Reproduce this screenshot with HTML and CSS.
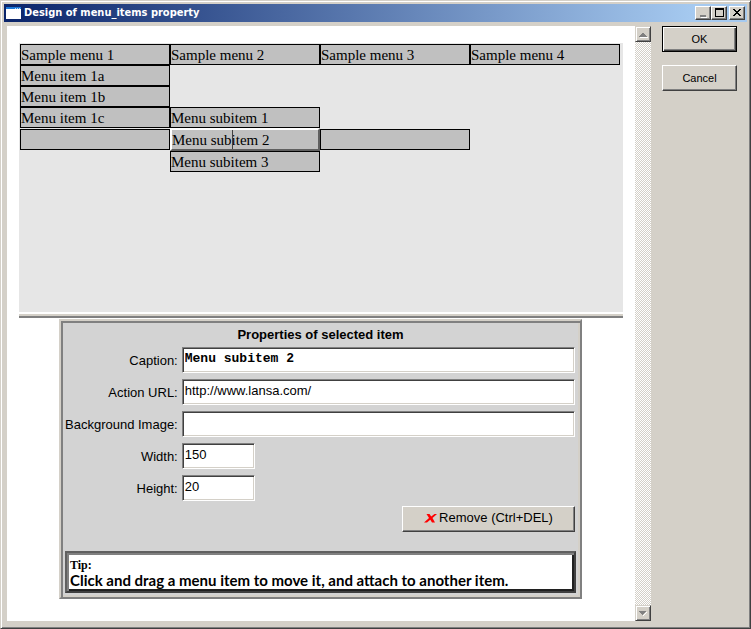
FILE: index.html
```html
<!DOCTYPE html>
<html lang="en">
<head>
  <meta charset="UTF-8">
  <title>Design of menu_items property</title>
  <link rel="stylesheet" href="styles.css">
</head>
<body>

<div class="window">

  <div class="titlebar">
    <svg class="app-icon" width="16" height="14" viewBox="0 0 16 14" shape-rendering="crispEdges">
      <rect x="0" y="1" width="15" height="12" fill="#fff"/>
      <rect x="0" y="1" width="15" height="2" fill="#1c78d8"/>
      <path d="M9 2.500h1M11 2.500h1M13 2.500h1" stroke="#b8d8f8"/>
    </svg>
    <h1 class="title">Design of menu_items property</h1>
    <button class="tool" aria-label="Minimize">
      <svg width="12" height="10" viewBox="0 0 12 10" shape-rendering="crispEdges"><path d="M4 9h6v1H4z" fill="#fff"/><path d="M3 7h6v2H3z" fill="#808080"/></svg>
    </button>
    <button class="tool" aria-label="Maximize">
      <svg width="12" height="10" viewBox="0 0 12 10" shape-rendering="crispEdges"><path d="M2 0h9v9H2zM3 2v6h7V2z" fill="#000" fill-rule="evenodd"/></svg>
    </button>
    <button class="tool close" aria-label="Close">
      <svg width="12" height="10" viewBox="0 0 12 10" shape-rendering="crispEdges"><path d="M2 1h2v1h1v1h2V2h1V1h2v1H9v1H8v1H7v1h1v1h1v1h1v1H8V7H7V6H5v1H4v1H2V7h1V6h1V5h1V4H4V3H3V2H2z" fill="#000"/></svg>
    </button>
  </div>

  <div class="content">

    <div class="document">

      <!-- menu tree, one grid column per level -->
      <div class="designer">
        <div class="item">Sample menu 1</div>
        <div class="item">Sample menu 2</div>
        <div class="item">Sample menu 3</div>
        <div class="item">Sample menu 4</div>
        <div class="item level1">Menu item 1a</div>
        <div class="item level1">Menu item 1b</div>
        <div class="item level1">Menu item 1c</div>
        <div class="item level2">Menu subitem 1</div>
        <div class="item level1"></div>
        <div class="item level2 selected">Menu subitem 2<span class="cursor"></span></div>
        <div class="item level3"></div>
        <div class="item level2">Menu subitem 3</div>
      </div>

      <div class="splitter"></div>

      <form class="properties">
        <h2>Properties of selected item</h2>
        <div class="fields">
          <label for="caption">Caption:</label>
          <input type="text" id="caption" class="mono" value="Menu subitem 2">
          <label for="url">Action URL:</label>
          <input type="text" id="url" value="http://www.lansa.com/">
          <label for="image">Background Image:</label>
          <input type="text" id="image" value="">
          <label for="width">Width:</label>
          <input type="text" id="width" class="short" value="150">
          <label for="height">Height:</label>
          <input type="text" id="height" class="short" value="20">
        </div>
        <button type="button" class="remove">
          <svg width="13" height="11" viewBox="0 0 13 11"><path d="M2.500 2h3l1.700 2.500L10.500 2H13L8.500 6l2.500 4.500H8L6.300 7.800L3 10.500H0L5 6z" fill="#f00"/></svg>
          Remove (Ctrl+DEL)
        </button>
        <div class="tip">
          <p class="tip-head">Tip:</p>
          <p class="tip-text">Click and drag a menu item to move it, and attach to another item.</p>
        </div>
      </form>

    </div>

    <div class="scrollbar">
      <button class="arrow" aria-label="Scroll up">
        <svg width="12" height="12" viewBox="0 0 12 12" shape-rendering="crispEdges"><path d="M3 9h8v1H3z" fill="#fff"/><path d="M6 5h1v1h1v1h1v1h1v1H2V8h1V7h1V6h1V5z" fill="#808080"/></svg>
      </button>
      <button class="arrow" aria-label="Scroll down">
        <svg width="12" height="12" viewBox="0 0 12 12" shape-rendering="crispEdges"><path d="M10 5v1H9v1H8v1H7v1H6V8h1V7h1V6h1V5z" fill="#fff"/><path d="M2 4h7v1H8v1H7v1H6v1H5V7H4V6H3V5H2z" fill="#808080"/></svg>
      </button>
    </div>

    <div class="actions">
      <button class="default">OK</button>
      <button>Cancel</button>
    </div>

  </div>
</div>

</body>
</html>
```
FILE: styles.css
```css
* {
  box-sizing: border-box;
}
body {
  margin: 0;
  font-family: "Liberation Sans", Arial, sans-serif;
  font-size: 13px;
  color: #000;
}
h1, h2, p {
  margin: 0;
}

/* raised grey 3D button */
button {
  padding: 0;
  background: #d4d0c8;
  border: 1px solid;
  border-color: #fff #404040 #404040 #fff;
  border-radius: 0;
  box-shadow: inset -1px -1px #808080;
  font-family: inherit;
  color: #000;
}

.window {
  display: flex;
  flex-direction: column;
  min-height: 100vh;
  padding: 3px;
  background: #d4d0c8;
  border: 1px solid;
  border-color: #d4d0c8 #404040 #404040 #d4d0c8;
  box-shadow: inset 1px 1px #fff, inset -1px -1px #808080;
}

.titlebar {
  display: flex;
  align-items: center;
  height: 18px;
  padding: 0 2px;
  background: linear-gradient(to right, #0a246a, #a6caf0 93%);
}
.title {
  flex: 1;
  margin-left: 2px;
  font-family: "DejaVu Sans Condensed", Tahoma, sans-serif;
  font-size: 11px;
  line-height: 18px;
  color: #fff;
}
.tool {
  display: flex;
  width: 16px;
  height: 14px;
}
.tool svg {
  margin: 1px;
}
.close {
  margin-left: 2px;
}

.content {
  flex: 1;
  display: flex;
  padding: 4px 10px 4px 3px;
}
.document {
  flex: 1;
  padding: 17px 12px 22px;
  background: #fff;
}

.designer {
  display: grid;
  grid-template-columns: repeat(4, 150px);
  align-items: center;
  align-content: start;
  min-height: 269px;
  padding: 1px;
  background: #e6e6e6;
}
.item {
  height: 21px;
  background: #c0c0c0;
  border: 1px solid #000;
  font-family: "Liberation Serif", "Times New Roman", serif;
  font-size: 15px;
  line-height: 20px;
}
.level1 {
  grid-column: 1;
}
.level2 {
  grid-column: 2;
}
.level3 {
  grid-column: 3;
}
.selected {
  position: relative;
  height: 23px;
  border: 2px solid;
  border-color: #fff #606060 #606060 #fff;
}
.cursor {
  position: absolute;
  left: 60px;
  top: 0;
  width: 1px;
  height: 19px;
  background: #404040;
}

.splitter {
  height: 6px;
  border: solid;
  border-width: 2px 0;
  border-color: #fff #808080 #808080;
  background: #d4d0c8;
}

.properties {
  margin: 1px 41px 0 40px;
  padding: 2px 4px 4px;
  background: #d3d3d3;
  border: 2px solid;
  border-color: #d4d0c8 #808080 #808080 #d4d0c8;
  box-shadow: inset 2px 2px #808080, inset -2px -2px #d4d0c8;
}
.properties h2 {
  font-size: 13px;
  line-height: 24px;
  text-align: center;
}
.fields {
  display: grid;
  grid-template-columns: auto 1fr;
  gap: 6px 4px;
  align-items: center;
  margin-right: 1px;
}
.fields label {
  text-align: right;
  white-space: nowrap;
}
.fields input {
  width: 100%;
  height: 26px;
  padding: 0 2px 4px;
  background: #fff;
  border: 1px solid;
  border-color: #808080 #fff #fff #808080;
  border-radius: 0;
  box-shadow: inset 1px 1px #404040, inset -1px -1px #d4d0c8;
  font-family: inherit;
  font-size: 13px;
}
.fields .mono {
  font-family: "Liberation Mono", "Courier New", monospace;
  font-weight: bold;
}
.fields .short {
  width: 73px;
}
.remove {
  display: flex;
  align-items: center;
  justify-content: center;
  gap: 2px;
  width: 173px;
  height: 26px;
  margin: 5px 1px 19px auto;
  padding-bottom: 3px;
  font-size: 13px;
}

.tip {
  min-height: 42px;
  padding: 5px 3px 2px;
  background: #fff;
  border: 2px solid;
  border-color: #606060 #404040 #404040 #606060;
  box-shadow: inset 2px 2px #808080, inset -2px -2px #202020;
}
.tip-head {
  font-family: "Liberation Serif", "Times New Roman", serif;
  font-size: 12px;
  font-weight: bold;
  line-height: 15px;
}
.tip-text {
  font-family: Lato, "Century Gothic", sans-serif;
  font-size: 15px;
  font-weight: bold;
  line-height: 15px;
}

.scrollbar {
  display: flex;
  flex-direction: column;
  justify-content: space-between;
  width: 16px;
  background: repeating-conic-gradient(#fff 0 25%, #d4d0c8 0 50%) 0 0 / 2px 2px;
}
.arrow {
  display: flex;
  width: 16px;
  height: 16px;
  border-color: #d4d0c8 #404040 #404040 #d4d0c8;
  box-shadow: inset 1px 1px #fff, inset -1px -1px #808080;
}
.arrow svg {
  margin: 1px;
}

.actions {
  display: flex;
  flex-direction: column;
  gap: 13px;
  width: 75px;
  margin-left: 11px;
}
.actions button {
  height: 26px;
  font-size: 11px;
}
.actions .default {
  border-color: #000;
  box-shadow: inset 1px 1px #fff, inset -1px -1px #404040, inset -2px -2px #808080;
}
```
